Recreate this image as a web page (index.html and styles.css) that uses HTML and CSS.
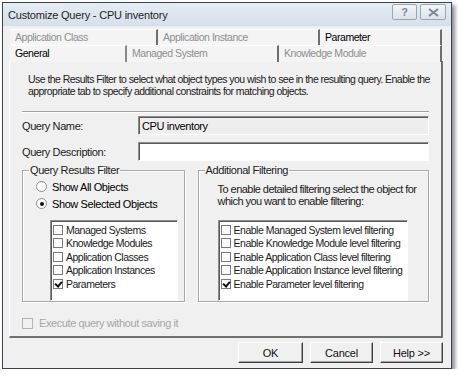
FILE: index.html
```html
<!DOCTYPE html>
<html>
<head>
<meta charset="utf-8">
<title>Customize Query - CPU inventory</title>
<link rel="stylesheet" href="styles.css">
</head>
<body>
<div class="window">
    <div class="titlebar">
        <span class="title">Customize Query - CPU inventory</span>
        <div class="caption-btns">
            <div class="cap-btn help">?</div>
            <div class="cap-btn close">
                <svg width="11" height="9" viewBox="0 0 11 9"><path d="M1 1 L10 8 M10 1 L1 8" stroke="#7c8795" stroke-width="2" fill="none"/></svg>
            </div>
        </div>
    </div>

    <div class="tabs">
        <div class="tab-row back">
            <div class="tab w1">Application Class</div>
            <div class="tab w2">Application Instance</div>
            <div class="tab w3 dark">Parameter</div>
        </div>
        <div class="tab-row front">
            <div class="tab w4 active">General</div>
            <div class="tab w5">Managed System</div>
            <div class="tab w6">Knowledge Module</div>
        </div>
    </div>

    <div class="panel">
        <p class="intro">Use the Results Filter to select what object types you wish to see in the resulting query. Enable the<br>appropriate tab to specify additional constraints for matching objects.</p>
        <div class="rule"></div>

        <div class="field">
            <label>Query Name:</label>
            <div class="input disabled">CPU inventory</div>
        </div>
        <div class="field">
            <label>Query Description:</label>
            <div class="input"></div>
        </div>

        <div class="groups">
            <fieldset class="group left">
                <legend>Query Results Filter</legend>
                <div class="radio"><span class="dot"></span>Show All Objects</div>
                <div class="radio on"><span class="dot"></span>Show Selected Objects</div>
                <div class="listbox small">
                    <div class="item"><span class="box"></span>Managed Systems</div>
                    <div class="item"><span class="box"></span>Knowledge Modules</div>
                    <div class="item"><span class="box"></span>Application Classes</div>
                    <div class="item"><span class="box"></span>Application Instances</div>
                    <div class="item"><span class="box checked"></span>Parameters</div>
                </div>
            </fieldset>
            <fieldset class="group right">
                <legend>Additional Filtering</legend>
                <p class="note">To enable detailed filtering select the object for which you want to enable filtering:</p>
                <div class="listbox wide">
                    <div class="item"><span class="box"></span>Enable Managed System level filtering</div>
                    <div class="item"><span class="box"></span>Enable Knowledge Module level filtering</div>
                    <div class="item"><span class="box"></span>Enable Application Class level filtering</div>
                    <div class="item"><span class="box"></span>Enable Application Instance level filtering</div>
                    <div class="item"><span class="box checked"></span>Enable Parameter level filtering</div>
                </div>
            </fieldset>
        </div>

        <div class="execute"><span class="box grey"></span>Execute query without saving it</div>
    </div>

    <div class="footer">
        <div class="button">OK</div>
        <div class="button">Cancel</div>
        <div class="button">Help &gt;&gt;</div>
    </div>
</div>
</body>
</html>
```

FILE: styles.css
```css
body {
    margin: 0;
    background: #fff;
    color: #000;
    font-family: "Liberation Sans", Arial, sans-serif;
    font-size: 11px;
    letter-spacing: -0.4px;
}

.window {
    margin: 2px 0 0 2px;
    width: 448px;
    height: 365px;
    border: 1px solid #3d4450;
    background: #f0f0f0;
    box-shadow: 3px 3px 4px rgba(0, 0, 0, 0.45);
    display: flex;
    flex-direction: column;
}

.titlebar {
    height: 23px;
    display: flex;
    align-items: center;
    justify-content: space-between;
    padding: 0 5px 0 5px;
    background: linear-gradient(#e4ebf3, #d6e0eb);
    border-bottom: 1px solid #e6ecf2;
}

.title {
    font-size: 11px;
    color: #1e1e1e;
    letter-spacing: -0.2px;
}

.caption-btns {
    display: flex;
    gap: 3px;
    align-self: flex-start;
    margin-top: 1px;
}

.cap-btn {
    height: 14px;
    border: 1px solid #9aa6b4;
    border-radius: 2px;
    background: linear-gradient(#f2f5f8, #dce3eb);
    display: flex;
    align-items: center;
    justify-content: center;
    color: #7c8795;
    font-weight: bold;
    font-size: 11px;
    letter-spacing: 0;
}

.cap-btn.help { width: 23px; }
.cap-btn.close { width: 24px; }

.tabs {
    margin: 2px 0 0 7px;
}

.tab-row {
    display: flex;
    height: 16px;
}

.tab {
    box-sizing: border-box;
    height: 16px;
    padding: 1px 0 0 5px;
    color: #8f8f8f;
    font-size: 10.5px;
    letter-spacing: -0.45px;
    border-top: 1px solid #fdfdfd;
    border-right: 2px solid #6e6e6e;
    background: #f4f4f4;
    white-space: nowrap;
}

.tab.dark, .tab.active { color: #000; }
.tab.active { border-right-color: #8a8a8a; }
.front .tab { height: 17px; }

.w1 { width: 148px; }
.w2 { width: 162px; }
.w3 { width: 122px; }
.w4 { width: 117px; }
.w5 { width: 152px; }
.w6 { width: 163px; }

.panel {
    box-sizing: border-box;
    margin-left: 6px;
    width: 434px;
    height: 277px;
    border-left: 1px solid #fff;
    border-right: 2px solid #707070;
    border-bottom: 2px solid #707070;
    padding: 0 12px 0 12px;
}

.intro {
    margin: 12px 0 0 6px;
    font-size: 10.5px;
    line-height: 12px;
    letter-spacing: -0.55px;
    white-space: nowrap;
    color: #202020;
}

.rule {
    margin-top: 14px;
    height: 0;
    border-top: 1px solid #a0a0a0;
    border-bottom: 1px solid #fff;
}

.field {
    display: flex;
    align-items: center;
    height: 19px;
    margin-top: 3px;
}

.field + .field { margin-top: 7px; }

.field label {
    width: 116px;
    color: #202020;
}

.input {
    box-sizing: border-box;
    flex: 1;
    height: 19px;
    background: #fff;
    border: 1px solid;
    border-color: #8c8c8c #fff #fff #8c8c8c;
    box-shadow: inset 1px 1px 0 #5a5a5a;
    padding: 3px 0 0 3px;
}

.input.disabled {
    background: #eeeeee;
}

.groups {
    display: flex;
    gap: 13px;
    margin-top: 3px;
}

.group {
    margin: 0;
    box-sizing: border-box;
    height: 138px;
    padding: 0;
    border: 1px solid #a8a8a8;
    box-shadow: 1px 1px 0 #fff, inset 1px 1px 0 #fff;
}

.group.left { width: 163px; }
.group.right { width: 232px; }

.group legend {
    padding: 0 1px;
    margin-left: 6px;
    color: #202020;
}

.radio {
    display: flex;
    align-items: center;
    height: 17px;
    margin-left: 13px;
}

.radio:first-of-type { margin-top: 2px; }

.dot {
    box-sizing: border-box;
    width: 11px;
    height: 11px;
    border-radius: 50%;
    border: 1px solid #8f8f8f;
    background: #fff;
    margin-right: 5px;
    display: flex;
    align-items: center;
    justify-content: center;
}

.radio.on .dot::after {
    content: "";
    width: 4px;
    height: 4px;
    border-radius: 50%;
    background: #111;
}

.listbox {
    box-sizing: border-box;
    height: 81px;
    background: #fff;
    border: 1px solid;
    border-color: #8c8c8c #fff #fff #8c8c8c;
    box-shadow: inset 1px 1px 0 #5a5a5a;
    padding: 2px 0 0 2px;
}

.listbox.small {
    width: 128px;
    margin: 8px 0 0 27px;
}

.listbox.wide {
    width: 190px;
    margin: 13px 0 0 19px;
}

.item {
    display: flex;
    align-items: center;
    height: 13.5px;
    font-size: 10.5px;
    letter-spacing: -0.5px;
    color: #1a1a1a;
    white-space: nowrap;
}

.box {
    box-sizing: border-box;
    width: 10px;
    height: 10px;
    border: 1px solid #7a7a7a;
    background: #fff;
    margin-right: 3px;
    flex: none;
    position: relative;
}

.box.checked::after {
    content: "";
    position: absolute;
    left: 2px;
    top: 0;
    width: 3px;
    height: 5px;
    border: solid #111;
    border-width: 0 2px 2px 0;
    transform: rotate(40deg);
}

.box.grey {
    border-color: #b4b4b4;
    background: #f0f0f0;
    width: 11px;
    height: 11px;
    margin-right: 6px;
}

.note {
    margin: 7px 0 0 19px;
    line-height: 12px;
    letter-spacing: -0.55px;
    color: #202020;
}

.execute {
    display: flex;
    align-items: center;
    margin-top: 15px;
    color: #a6a6a6;
}

.footer {
    display: flex;
    justify-content: flex-end;
    gap: 7px;
    padding: 4px 8px 0 0;
}

.button {
    box-sizing: border-box;
    width: 63px;
    height: 21px;
    border: 1px solid;
    border-color: #fff #404040 #404040 #fff;
    box-shadow: inset -1px -1px 0 #a0a0a0;
    background: #f0f0f0;
    display: flex;
    align-items: center;
    justify-content: center;
    color: #111;
    letter-spacing: -0.2px;
}

.button:first-child { width: 65px; }
```
